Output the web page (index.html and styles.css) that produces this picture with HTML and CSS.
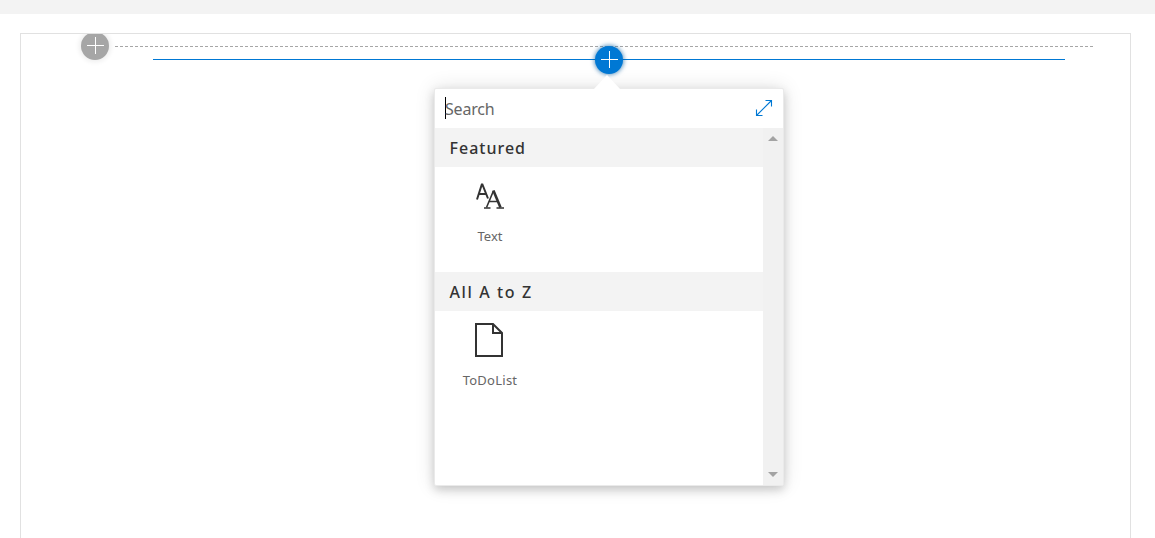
FILE: index.html
```html
<!DOCTYPE html>
<html lang="en">
<head>
<meta charset="utf-8">
<title>Web part toolbox</title>
<link rel="stylesheet" href="styles.css">
</head>
<body>
<div class="command-bar"></div>
<main class="canvas">
  <div class="zone-row">
    <button class="add-button add-section" aria-label="Add a section">
      <svg width="18" height="18" viewBox="0 0 18 18"><path class="plus" d="M1 8.5H18M9.5 0V17"/></svg>
    </button>
    <svg class="zone-line" width="979" height="1"><path d="M0 .5H979"/></svg>
  </div>
  <div class="insert-line"></div>
  <div class="toolbox-anchor">
    <button class="add-button add-part" aria-label="Add a web part">
      <svg width="18" height="18" viewBox="0 0 18 18"><path class="plus" d="M1 8.5H18M9.5 0V17"/></svg>
    </button>
    <div class="toolbox">
      <div class="beak"></div>
      <div class="search">
        <span class="caret"></span>
        <span class="placeholder">Search</span>
        <svg class="expand" width="18" height="18" viewBox="0 0 18 18"><path d="M1.5 16.5L16 2M10.5 1.5H16.5V7.5M1.5 10.5V16.5H7.5"/></svg>
      </div>
      <div class="body">
        <div class="list">
          <h2 class="heading"><span class="featured">Featured</span></h2>
          <div class="group">
            <div class="part">
              <svg class="icon" width="30" height="36" viewBox="0 0 30 36">
                <g fill="none" stroke="#333" transform="translate(0 2.5)">
                  <path stroke-width="2" d="M2 19L6.8 4H7.4L13 18M3.8 13.5H11.2"/>
                  <path stroke-width="1.6" d="M11.5 27L18.5 10.3M13.8 21H23"/>
                  <path stroke-width="2.6" d="M18.4 10L25.5 27"/>
                  <path stroke-width="1.5" d="M9 27.4H15.5M21.5 27.4H29"/>
                </g>
              </svg>
              <span class="label">Text</span>
            </div>
          </div>
          <h2 class="heading"><span class="all">All A to Z</span></h2>
          <div class="group">
            <div class="part">
              <svg class="icon" width="30" height="36" viewBox="0 0 30 36">
                <path fill="none" stroke="#333" stroke-width="2" d="M1 2H18L27 11V34H1ZM18 2V11H27"/>
              </svg>
              <span class="label label-todo">ToDoList</span>
            </div>
          </div>
        </div>
        <div class="scrollbar">
          <svg width="10" height="5" viewBox="0 0 10 5"><path d="M0 5L5 0L10 5Z"/></svg>
          <svg width="10" height="5" viewBox="0 0 10 5"><path d="M0 0H10L5 5Z"/></svg>
        </div>
      </div>
    </div>
  </div>
</main>
</body>
</html>
```
FILE: styles.css
```css
* { box-sizing: border-box; }
body {
  margin: 0;
  height: 538px;
  overflow: hidden;
  background: #fff;
  font-family: "Noto Sans", "Open Sans", sans-serif;
}
.command-bar { height: 14px; background: #f3f3f3; }
.canvas {
  margin: 19px 24px 0 20px;
  height: 520px;
  border: 1px solid #e1e1e1;
  overflow: hidden;
}
.zone-row {
  display: flex;
  align-items: center;
  height: 28px;
  margin-top: -2px;
  padding-left: 60px;
  gap: 6px;
}
.add-button {
  display: flex;
  align-items: center;
  justify-content: center;
  flex: none;
  width: 28px;
  height: 28px;
  padding: 0;
  border: 0;
  border-radius: 50%;
}
.add-section { background: #a6a6a6; box-shadow: 0 0 5px 2px rgba(0,0,0,.07); }
.plus { fill: none; stroke: #fff; stroke-width: 1; }
.zone-line path { stroke: #a6a6a6; stroke-dasharray: 3 2; }
.insert-line {
  height: 1px;
  margin: -1px 65px 0 132px;
  background: #0078d4;
}
.toolbox-anchor {
  position: relative;
  width: 350px;
  margin: -15px 0 0 413px;
  padding-top: 1px;
}
.add-part {
  margin-left: 161px;
  background: #0078d4;
  box-shadow: 0 0 4px 1px rgba(0,90,158,.6);
}
.toolbox {
  position: absolute;
  top: 43px;
  left: 0;
  width: 350px;
  height: 398px;
  border: 1px solid #eaeaea;
  border-radius: 2px;
  background: #fff;
  box-shadow: 0 0 20px rgba(0,0,0,.12), 0 4px 10px rgba(0,0,0,.17);
}
.beak {
  position: absolute;
  top: -14px;
  left: 158px;
  width: 28px;
  height: 15px;
  background: #fff;
  clip-path: polygon(50% 0, 100% 100%, 0 100%);
}
.search {
  display: flex;
  align-items: center;
  height: 39px;
  padding: 0 10px;
}
.caret { width: 1px; height: 22px; margin-top: -1px; background: #000; }
.placeholder { margin-left: -1px; color: #666; font-size: 16px; letter-spacing: -.2px; }
.expand { margin: -2px 0 0 auto; fill: none; stroke: #0078d4; stroke-width: 1.1; }
.body { display: flex; height: 357px; }
.list { width: 328px; }
.heading {
  display: flex;
  align-items: center;
  height: 39px;
  margin: 0;
  padding-left: 14.5px;
  background: #f3f3f3;
  color: #333;
  font-size: 16px;
  font-weight: 500;
  white-space: nowrap;
}
.featured { letter-spacing: 1px; }
.all { letter-spacing: 1.6px; }
.group { height: 105px; padding: 11px 0 0 10px; }
.part { display: flex; flex-direction: column; align-items: center; width: 90px; }
.label { margin-top: 12px; color: #666; font-size: 13px; line-height: 20px; }
.label-todo { letter-spacing: .25px; }
.scrollbar {
  display: flex;
  flex-direction: column;
  align-items: center;
  justify-content: space-between;
  width: 20px;
  padding: 8px 0;
  background: #f1f1f1;
  fill: #a3a3a3;
}
```
